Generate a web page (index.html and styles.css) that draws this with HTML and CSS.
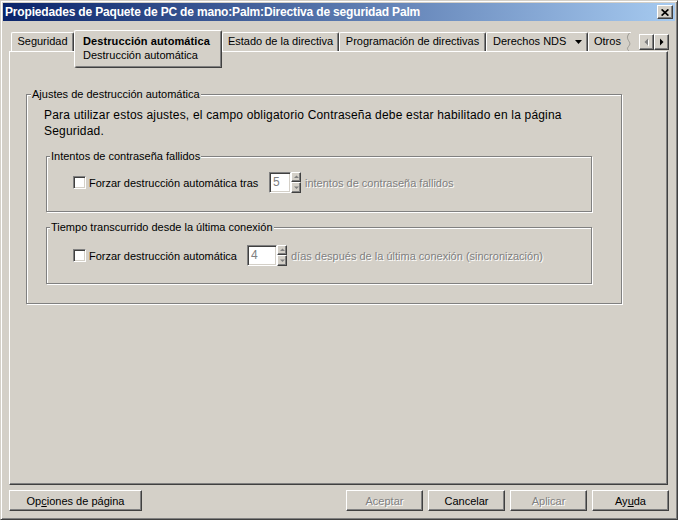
FILE: index.html
```html
<!DOCTYPE html>
<html lang="es">
<head>
<meta charset="utf-8">
<title>Propiedades de Paquete de PC de mano</title>
<link rel="stylesheet" href="styles.css">
</head>
<body>
<div class="window">
  <div class="titlebar">
    <span class="title">Propiedades de Paquete de PC de mano:Palm:Directiva de seguridad Palm</span>
    <button class="btn close" type="button" aria-label="Cerrar">
      <svg width="8" height="7" viewBox="0 0 8 7"><path d="M0.6 0.4 7.4 6.6M7.4 0.4 0.6 6.6" stroke="#000" stroke-width="1.7" fill="none"/></svg>
    </button>
  </div>

  <div class="tabstrip">
    <div class="tab w-seg">Seguridad</div>
    <div class="tab selected">
      <div class="sel-label">Destrucción automática</div>
      <div class="sel-sub">Destrucción automática</div>
    </div>
    <div class="tab w-est">Estado de la directiva</div>
    <div class="tab w-prog">Programación de directivas</div>
    <div class="tab w-der">Derechos NDS<svg class="dd" width="7" height="4" viewBox="0 0 7 4"><path d="M0 0h7L3.5 4z" fill="#000"/></svg></div>
    <div class="tab tab-cut">Otros<svg class="wave" width="5" height="18" viewBox="0 0 5 18"><path d="M3.5 0C1 3 1 5 2.5 7.5S4.5 11 2.5 13.5 2 17 3 18" stroke="#9a9892" stroke-width="1" fill="none"/></svg></div>
    <div class="scroller">
      <button class="btn sbtn" type="button" aria-label="Anterior">
        <svg width="6" height="9" viewBox="0 0 6 9"><path d="M5 1.5v7L1.5 5z" fill="#fff"/><path d="M4 0.5v7L0.5 4z" fill="#808080"/></svg>
      </button>
      <button class="btn sbtn" type="button" aria-label="Siguiente">
        <svg width="5" height="8" viewBox="0 0 5 8"><path d="M1 0.5v7L4.5 4z" fill="#000"/></svg>
      </button>
    </div>
  </div>

  <div class="panel">
    <div class="group outer">
      <span class="group-label">Ajustes de destrucción automática</span>
      <p class="note">Para utilizar estos ajustes, el campo obligatorio Contraseña debe estar habilitado en la página Seguridad.</p>

      <div class="group inner g1">
        <span class="group-label">Intentos de contraseña fallidos</span>
        <div class="row">
          <span class="check"></span>
          <span class="lbl lbl1">Forzar destrucción automática tras</span>
          <span class="spinner">
            <span class="field f1">5</span>
            <span class="spins">
              <span class="spin up"><svg width="5" height="4" viewBox="0 0 5 4"><path d="M2.5 0.5 5 3H0z" fill="#808080"/></svg></span>
              <span class="spin down"><svg width="5" height="4" viewBox="0 0 5 4"><path d="M0 0.5h5L2.5 3z" fill="#808080"/></svg></span>
            </span>
          </span>
          <span class="disabled after">intentos de contraseña fallidos</span>
        </div>
      </div>

      <div class="group inner g2">
        <span class="group-label">Tiempo transcurrido desde la última conexión</span>
        <div class="row">
          <span class="check"></span>
          <span class="lbl lbl2">Forzar destrucción automática</span>
          <span class="spinner">
            <span class="field f2">4</span>
            <span class="spins">
              <span class="spin up"><svg width="5" height="4" viewBox="0 0 5 4"><path d="M2.5 0.5 5 3H0z" fill="#808080"/></svg></span>
              <span class="spin down"><svg width="5" height="4" viewBox="0 0 5 4"><path d="M0 0.5h5L2.5 3z" fill="#808080"/></svg></span>
            </span>
          </span>
          <span class="disabled after">días después de la última conexión (sincronización)</span>
        </div>
      </div>
    </div>
  </div>

  <div class="actions">
    <button class="btn pbtn wide" type="button">Op<u>c</u>iones de página</button>
    <div class="right">
      <button class="btn pbtn off" type="button">Aceptar</button>
      <button class="btn pbtn" type="button">Cancelar</button>
      <button class="btn pbtn off" type="button">Aplicar</button>
      <button class="btn pbtn" type="button">Ay<u>u</u>da</button>
    </div>
  </div>
</div>
</body>
</html>
```

FILE: styles.css
```css
* {
  box-sizing: border-box;
}

html,
body {
  margin: 0;
  padding: 0;
}

body {
  width: 678px;
  height: 520px;
  overflow: hidden;
  background: #d4d0c8;
  color: #000;
  font-family: "Liberation Sans", Arial, sans-serif;
  font-size: 11px;
}

.window {
  width: 678px;
  height: 520px;
  padding: 2px;
  border: 1px solid;
  border-color: #d4d0c8 #404040 #404040 #d4d0c8;
  box-shadow: inset 1px 1px #fff, inset -1px -1px #808080;
  display: flex;
  flex-direction: column;
}

/* ---------- title bar ---------- */
.titlebar {
  flex: none;
  height: 18px;
  display: flex;
  align-items: center;
  padding-left: 2px;
  background: linear-gradient(to right, #0a246a, #a6caf0);
}

.title {
  flex: 1;
  color: #fff;
  font-weight: bold;
  font-size: 12px;
  letter-spacing: -0.17px;
  white-space: nowrap;
}

.btn {
  appearance: none;
  margin: 0;
  padding: 0;
  font: inherit;
  color: #000;
  background: #d4d0c8;
  border: 1px solid;
  border-color: #fff #404040 #404040 #fff;
  box-shadow: inset -1px -1px #808080;
  display: flex;
  align-items: center;
  justify-content: center;
}

.close {
  width: 16px;
  height: 14px;
  margin-right: 2px;
}

/* ---------- tabs ---------- */
.tabstrip {
  flex: none;
  height: 19px;
  margin: 11px 6px 0 6px;
  display: flex;
  align-items: flex-start;
}

.tab {
  flex: none;
  height: 19px;
  border-top: 1px solid #fff;
  border-left: 1px solid #fff;
  border-right: 1px solid #404040;
  box-shadow: inset -1px 0 #808080;
  border-radius: 2px 2px 0 0;
  line-height: 17px;
  text-align: center;
  white-space: nowrap;
  background: #d4d0c8;
}

.w-seg {
  width: 63px;
  margin-left: 2px;
}

.selected {
  position: relative;
  z-index: 1;
  width: 148px;
  height: 38px;
  margin-top: -2px;
  padding: 3px 0 0 8px;
  border-bottom: 1px solid #404040;
  box-shadow: inset -1px -1px #808080;
  border-radius: 2px 2px 0 3px;
  line-height: 14px;
  text-align: left;
}

.sel-label {
  font-weight: bold;
  letter-spacing: 0.1px;
}

.w-est {
  width: 117px;
}

.w-prog {
  width: 147px;
}

.w-der {
  width: 102px;
  text-align: left;
  padding-left: 6px;
}

.dd {
  margin-left: 9px;
  vertical-align: 1px;
}

.tab-cut {
  width: 43px;
  border-right: none;
  box-shadow: none;
  text-align: left;
  padding-left: 5px;
  border-radius: 2px 0 0 0;
}

.wave {
  margin-left: 5px;
  vertical-align: top;
}

.scroller {
  margin-left: auto;
  margin-top: 2px;
  display: flex;
}

.sbtn {
  width: 15px;
  height: 16px;
}

/* ---------- panel ---------- */
.panel {
  flex: none;
  height: 434px;
  margin: 0 7px 0 6px;
  border: 1px solid;
  border-color: #fff #404040 #404040 #fff;
  box-shadow: inset -1px -1px #808080;
}

.group {
  border: 1px solid #808080;
  box-shadow: inset 1px 1px #fff, 1px 1px #fff;
}

.group-label {
  display: table;
  background: #d4d0c8;
  line-height: 13px;
  padding: 0 1px;
  margin: -7px 0 0 4px;
}

.inner .group-label {
  margin-left: 3px;
}

.outer {
  width: 596px;
  margin: 42px 0 0 16px;
  padding-bottom: 19px;
}

.note {
  width: 560px;
  margin: 6px 0 0 17px;
  font-size: 12px;
  letter-spacing: 0.19px;
  line-height: 16px;
}

.inner {
  width: 546px;
  margin-left: 19px;
}

.g1 {
  margin-top: 17px;
  padding-bottom: 18px;
}

.g2 {
  margin-top: 15px;
  padding-bottom: 17px;
}

.g1 .row {
  margin-top: 9px;
}

.g2 .row {
  margin-top: 11px;
}

.row {
  height: 21px;
  margin-left: 26px;
  display: flex;
  align-items: center;
  white-space: nowrap;
}

.check {
  flex: none;
  width: 13px;
  height: 13px;
  background: #fff;
  border: 1px solid;
  border-color: #808080 #fff #fff #808080;
  box-shadow: inset 1px 1px #404040, inset -1px -1px #d4d0c8;
}

.lbl {
  margin-left: 3px;
  flex: none;
}

.lbl1 {
  width: 180px;
}

.lbl2 {
  width: 158px;
}

.spinner {
  display: flex;
  height: 21px;
}

.field {
  height: 21px;
  background: #fff;
  color: #808080;
  border: 1px solid;
  border-color: #808080 #fff #fff #808080;
  box-shadow: inset 1px 1px #404040, inset -1px -1px #d4d0c8;
  padding-left: 3px;
  line-height: 19px;
  font-size: 12px;
}

.f1 {
  width: 22px;
}

.f2 {
  width: 30px;
}

.spins {
  display: flex;
  flex-direction: column;
}

.spin {
  width: 10px;
  background: #d4d0c8;
  border: 1px solid;
  border-color: #fff #404040 #404040 #fff;
  box-shadow: inset -1px -1px #808080;
  display: flex;
  align-items: center;
  justify-content: center;
}

.spin.up {
  height: 10px;
}

.spin.down {
  height: 11px;
}

.disabled {
  color: #808080;
  text-shadow: 1px 1px 0 #fff;
}

.after {
  margin-left: 4px;
}

/* ---------- bottom buttons ---------- */
.actions {
  flex: none;
  height: 21px;
  margin: 5px 6px 0 6px;
  display: flex;
}

.right {
  margin-left: auto;
  display: flex;
  gap: 5px;
}

.pbtn {
  width: 77px;
  height: 21px;
  font-size: 11px;
}

.wide {
  width: 133px;
}

.off {
  color: #808080;
  text-shadow: 1px 1px 0 #fff;
}
```
